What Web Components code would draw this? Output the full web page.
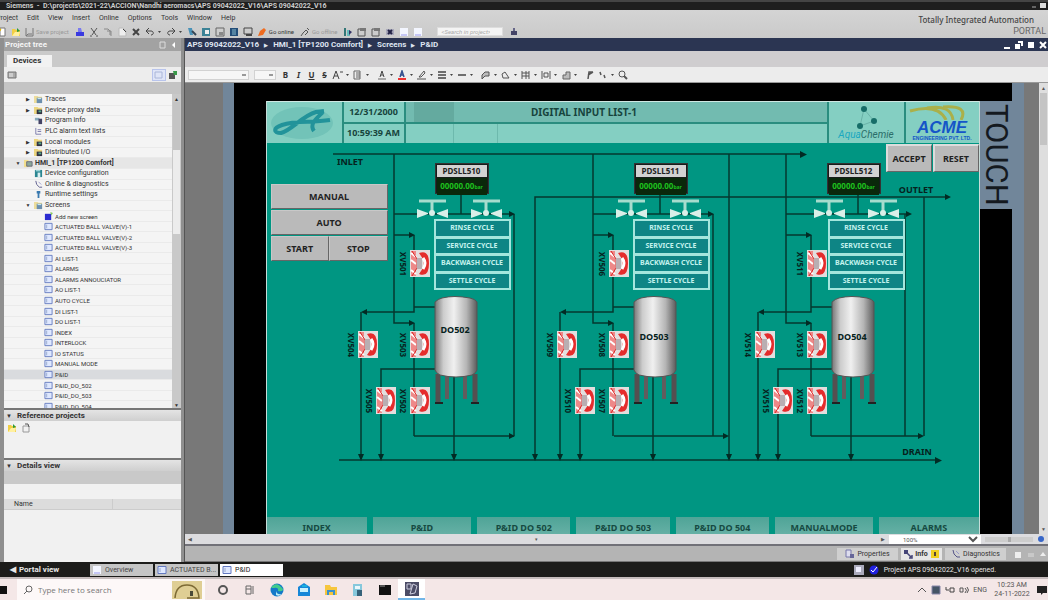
<!DOCTYPE html>
<html lang="en">
<head>
<meta charset="utf-8">
<title>TIA Portal - P&amp;ID screen</title>
<style>
html,body{height:100%;margin:0}
body{background:#cdcdcd;overflow:hidden;font:7px/10px Roboto,"Noto Sans",sans-serif;color:#333}
</style>
</head>
<body>
<tia-app></tia-app>
<script>
const BASE = `
*{box-sizing:border-box}
button,input,select{font:inherit;color:inherit;margin:0;padding:0;border:0;background:none;border-radius:0;outline:0}
button{white-space:nowrap;display:flex;align-items:center;justify-content:center}
svg{display:block;flex:none}
a{color:inherit;text-decoration:none}
ul,h1,h2,p{margin:0;padding:0;list-style:none;font-size:inherit}
`;
function define(name, css, html) {
  const t = document.createElement('template');
  t.innerHTML = `<style>${BASE}${css}</style>${html}`;
  customElements.define(name, class extends HTMLElement {
    constructor() {
      super();
      this.attachShadow({mode: 'open'}).append(t.content.cloneNode(true));
    }
  });
}
const svg = (body, w = 10, h = 10) => `<svg width="${w}" height="${h}" viewBox="0 0 ${w} ${h}" fill="none" aria-hidden="true">${body}</svg>`;
const I = {
  fresh: svg('<path d="M2 1h5v8H2z" fill="#fff" stroke="#777"/><path d="M0 2l3 1" stroke="#e8b800" stroke-width="2"/>'),
  open: svg('<path d="M1 2h3l1 1h4v6H1z" fill="#f1cf45"/><path d="M4 5h5L8 9H1z" fill="#fff0a0"/><path d="M6 1l3 3-3 1z" fill="#2d9a3a"/>'),
  save: svg('<path d="M2 1v8h7V1M2 9l2-2h4" stroke="#777"/>'),
  print: svg('<path d="M3 1h3l1 4H3z" fill="#7a7af0"/><path d="M1 5h8v4H1z" fill="#3a3ae0"/>'),
  cut: svg('<path d="M2 1l5 7M8 1L3 8M1 9h2M7 9h2" stroke="#555"/>'),
  copy: svg('<path d="M1 2h4l2 2v4M4 4h4v5" stroke="#888"/>'),
  paste: svg('<path d="M2 1h4l3 3v5H2z" fill="#eee" stroke="#bbb"/><path d="M6 2l3 3" stroke="#444"/>'),
  del: svg('<path d="M2 2l6 6M8 2L2 8" stroke="#444" stroke-width="2"/>'),
  undo: svg('<path d="M4 1L1 4l3 3M1 4h5c3 0 3 4 0 4" stroke="#444"/><path d="M13 4h3l-1.500 2z" fill="#444"/>', 17),
  redo: svg('<path d="M6 1l3 3-3 3M9 4H4C1 4 1 8 4 8" stroke="#444"/><path d="M13 4h3l-1.500 2z" fill="#444"/>', 17),
  comp: svg('<path d="M1 1h4l1 7H3z" fill="#4a92b8"/><path d="M5 4l4 4" stroke="#345" stroke-width="2"/>'),
  dl: svg('<path d="M1 1h8v8H1z" fill="#3b8296"/><path d="M4 3h4v4H4z" fill="#eee"/>'),
  ul: svg('<path d="M1 1h8v8H1z" stroke="#666"/><path d="M4 5h4v3H4z" fill="#888"/>'),
  sim: svg('<path d="M1 1h8v8H1z" fill="#234d78"/><path d="M3 3h4M3 5h4M3 7h4" stroke="#8bc"/>'),
  start: svg('<path d="M1 1h8v6H1z" stroke="#444"/><path d="M3 8h6" stroke="#444" stroke-width="2"/>'),
  plug: svg('<path d="M1 9l2-5 4-3 2 2-3 5z" fill="#f06c20"/>'),
  plugoff: svg('<path d="M1 9l2-3 3-3 2 2-3 3M7 1l2 2" stroke="#555"/>'),
  dev: svg('<path d="M1 1h2v8H1z" fill="#377"/><path d="M4 3h3v6H4z" fill="#6bb"/><path d="M6 3l3 2-3 3z" fill="#336"/>'),
  win: svg('<path d="M1 2h7v7H1z" stroke="#555"/><path d="M3 1h6v3H3z" fill="#777"/>'),
  cross: svg('<path d="M1 2h8v6H1z" fill="#aab"/><path d="M3 3l4 4M7 3L3 7" stroke="#224" stroke-width="2"/>'),
  page: svg('<path d="M1 1h8v8H1z" fill="#f3f6ff"/><path d="M2 8h6" stroke="#99e"/>'),
  find: svg('<path d="M2 4h6v4H2z" fill="#446"/><path d="M4 1h2v3H4z" fill="#668"/>'),
  folder: svg('<path d="M0 1h4l1 1h4v7H0z" fill="#eddd9c"/><path d="M3 3h6v6H3z" fill="#6c8fae"/><path d="M4 4h4" stroke="#dff"/>'),
  folderd: svg('<path d="M0 1h4l1 1h4v7H0z" fill="#ecd680"/><path d="M3 4h6v5H3z" fill="#334"/><path d="M5 5h3v2H5z" fill="#5a8"/>'),
  info: svg('<path d="M1 2h5v3H1z" fill="#8ab"/><path d="M5 3h4v6H5z" fill="#446"/>'),
  list: svg('<path d="M2 1v7h6M4 3h4M4 5h4" stroke="#77a"/>'),
  hmi: svg('<path d="M0 1h5v8H0z" fill="#f1de8c"/><path d="M3 3h6v5H3z" fill="#8aa89a" stroke="#667"/>'),
  conf: svg('<path d="M1 1h8v8H1z" fill="#2a8590"/><path d="M4 4h3v5H4z" fill="#d8eef0"/><path d="M2 2h5" stroke="#dff"/>'),
  diag: svg('<path d="M2 1l1 4 3 3h3" stroke="#558"/><path d="M5 2l3 3" stroke="#99c"/>'),
  run: svg('<path d="M3 1h4v3H6v5H4V4H3z" fill="#3a7ab0"/>'),
  add: svg('<path d="M1 2h7v7H1z" fill="#2b2bd0"/><path d="M7 0l3 1-2 3z" fill="#8ac860"/>'),
  scr: svg('<path d="M1 1.500h8v7H1z" fill="#dfe8ff" stroke="#6379c0"/><path d="M3 3v4" stroke="#9ac"/>'),
  props: svg('<path d="M1 1h5v7H1z" fill="#dde" stroke="#77a"/><path d="M5 5h4v4H5z" fill="#669"/>'),
  inf: svg('<path d="M1 1h4v4H1z" fill="#447"/><path d="M4 4l4 4M9 6v3H6" stroke="#447" stroke-width="1.500"/>'),
};
const btn = (icon, label, cls = '') => `<button class="${cls}" aria-label="${label}" title="${label}">${icon}</button>`;

define('tia-title', `
:host{display:flex;height:10px;flex:none;background:#1e1e1e;border-top:2px solid #444;color:#ccc;align-items:center;padding:0 2px 0 6px;font-size:7px;line-height:8px}
h1{font-weight:700;flex:1;white-space:pre}
`, `<h1>Siemens  -  D:\\projects\\2021-22\\ACCION\\Nandhi aeromacs\\APS 09042022_V16\\APS 09042022_V16</h1>${btn(svg('<path d="M2 5h4" stroke="#aaa"/>', 8, 8), 'Minimize')}${btn(svg('<path d="M2 1h6v5H2z" fill="#ddd"/>', 8, 8), 'Restore')}`);

define('tia-menubar', `
:host{display:flex;height:28px;flex:none;background:linear-gradient(#d4d4d4,#cacaca);justify-content:space-between}
nav{display:flex;height:15px;align-items:center;gap:9px;padding-top:1px;margin-left:-4px}
.tools{display:flex;height:13px;align-items:center;font-size:6px;margin-left:-4px}
.tools button{width:14px;height:12px}
.tools .w{width:21px}.tools .t{width:auto;gap:2px;padding:0 4px 0 2px}
.tools .o{padding:0 1px}
.dim{color:#999}
input{width:66px;height:9px;background:#f4f4f4;border:1px solid #ddd;padding:0 3px;margin:0 4px 0 12px;font-style:italic}
input::placeholder{color:#aaa;opacity:1}
.brand{text-align:right;font:500 8px/10px "Noto Sans",sans-serif;padding:5px 2px 0 0;color:#444}
.brand p:first-child{padding-right:12px}
.brand p+p{font:9px/12px Roboto,sans-serif;color:#666}
`, `<div><nav>${['Project','Edit','View','Insert','Online','Options','Tools','Window','Help'].map(m => `<button>${m}</button>`).join('')}</nav>
<div class="tools">${btn(I.fresh,'New project')}<button class="t o" aria-label="Open project">${I.open}</button><button class="t dim">${I.save}Save project</button>
${btn(I.print,'Print')}${btn(I.cut,'Cut')}${btn(I.copy,'Copy')}${btn(I.paste,'Paste')}${btn(I.del,'Delete')}${btn(I.undo,'Undo','w')}${btn(I.redo,'Redo','w')}
${btn(I.comp,'Compile')}${btn(I.dl,'Download')}${btn(I.ul,'Upload')}${btn(I.sim,'Simulate')}${btn(I.start,'Start runtime')}
<button class="t">${I.plug}Go online</button><button class="t dim">${I.plugoff}Go offline</button>
${btn(I.dev,'Accessible devices')}${btn(I.win,'Start')}${btn(I.win,'Stop')}${btn(I.cross,'Cross references')}${btn(I.page,'Split horizontally')}${btn(I.page,'Split vertically')}
<input type="search" aria-label="Search in project" placeholder="&lt;Search in project&gt;">${btn(I.find,'Find')}</div></div>
<div class="brand"><p>Totally Integrated Automation</p><p>PORTAL</p></div>`);

const tree = [
  [1,'▶','folder','Traces'],[1,'▶','folderd','Device proxy data'],[1,'','info','Program info'],[1,'','list','PLC alarm text lists'],
  [1,'▶','folderd','Local modules'],[1,'▶','folderd','Distributed I/O'],[0,'▼','hmi','HMI_1 [TP1200 Comfort]'],
  [1,'','conf','Device configuration'],[1,'','diag','Online & diagnostics'],[1,'','run','Runtime settings'],[1,'▼','folder','Screens'],
  [2,'','add','Add new screen'],
  ...['ACTUATED BALL VALVE(V)-1','ACTUATED BALL VALVE(V)-2','ACTUATED BALL VALVE(V)-3','AI LIST-1','ALARMS','ALARMS ANNOUCIATOR','AO LIST-1','AUTO CYCLE','DI LIST-1','DO LIST-1','INDEX','INTERLOCK','IO STATUS','MANUAL MODE','P&ID','P&ID_DO_502','P&ID_DO_503','P&ID_DO_504'].map(n => [2,'','scr',n])
];
define('tia-project-tree', `
:host{display:flex;flex-direction:column;min-height:0;background:#ededed;border:solid #8f8f8f;border-width:0 3px 0 4px}
.head{height:13px;flex:none;background:#a2a2a2;color:#f4f4f4;font-weight:700;font-size:8px;display:flex;align-items:center;padding:0 3px 0 1px}
.head h2{flex:1}
.tabs{height:16px;flex:none;background:#cacaca;display:flex;align-items:flex-end;padding-left:3px}
.tabs button{width:45px;height:12px;background:#f2f2f2;font-weight:700;font-size:8px;justify-content:flex-start;padding-left:6px}
.bar{height:15px;flex:none;display:flex;align-items:center;padding:0 3px;gap:2px}
.bar .sp{flex:1}
.on{background:#dfe5f7;border:1px solid #b8c4ec;width:14px;height:12px}
.gap{height:12px;flex:none;background:#c4c4c4}
.body{flex:1;min-height:0;display:flex;background:#f4f4f4}
ul{flex:1;height:318px;display:grid;grid-template-rows:repeat(30,1fr);padding-top:1px}
li{display:flex;align-items:center;gap:2px;border-bottom:1px solid #eaeaea;font-size:7px;line-height:9px;white-space:nowrap;min-height:0}
li svg{width:9px;height:9px}
.l0{padding-left:10px;background:#e6e6e6;font-weight:700}.l1{padding-left:20px}.l2{padding-left:30px;font-size:6px}
.tw{width:8px;font-size:5px;text-align:center}
.sel{background:#d9dbde}
.sb{width:9px;background:#c9c9c9;display:flex;flex-direction:column;align-items:center;justify-content:space-between;font-size:5px}
.sb i{width:7px;height:132px;background:linear-gradient(#c4c4c4 48px,#ececec 48px)}
.sb b{height:8px}
.sb u{flex:1}
`, `<div class="head"><h2>Project tree</h2>${btn(svg('<path d="M2 2h5v6H2z" stroke="#ddd"/>'),'Auto collapse')}${btn(svg('<path d="M7 2v6L4 5z" fill="#fff"/>'),'Collapse')}</div>
<div class="tabs"><button role="tab">Devices</button></div>
<div class="bar">${btn(svg('<path d="M1 2h8v6H1z" fill="#aaa" stroke="#777"/><path d="M3 3v4M5 3v4" stroke="#eee"/>'),'Columns')}<span class="sp"></span>${btn(svg('<path d="M1 2h7v6H1z" stroke="#aab6d8"/>'),'Overview','on')}${btn(svg('<path d="M1 3h6v6H1z" fill="#555"/><path d="M5 1h4v4H6z" fill="#3a9a4a"/>'),'Link')}</div>
<div class="gap"></div>
<div class="body"><ul role="tree">${tree.map(([l,tw,ic,n]) => `<li role="treeitem" class="l${l}${n === 'P&ID' ? ' sel' : ''}"><span class="tw" aria-hidden="true">${tw}</span>${I[ic]}<span>${n.replace('&','&amp;')}</span></li>`).join('')}</ul>
<div class="sb" aria-hidden="true"><b>▲</b><i></i><u></u><b>▼</b></div></div>`);

define('tia-section', `
:host{display:block;background:#f1f1f1;border:solid #8f8f8f;border-width:0 3px 0 4px;overflow:hidden}
h2{height:13px;border-top:2px solid #777;background:linear-gradient(#e4e4e4,#cfcfcf);font-size:8px;line-height:11px;font-weight:700;display:flex;gap:5px;padding-left:2px}
h2 i{font-size:6px;font-style:normal}
`, `<h2><i aria-hidden="true">▼</i><slot name="title"></slot></h2><slot></slot>`);

define('tia-sidebar', `
:host{display:grid;grid-template-rows:minmax(0,1fr) 50px 104px;min-height:0}
.icons{display:flex;gap:4px;padding:2px 3px}
.band{height:13px;background:#c9c9c9}
.cols{margin-top:15px;height:11px;background:#dcdcdc;display:grid;grid-template-columns:98px 1fr;padding-left:10px;font-size:7px;border-bottom:1px solid #ccc}
.cols span+span{border-left:1px solid #ccc}
`, `<tia-project-tree></tia-project-tree>
<tia-section><span slot="title">Reference projects</span><div class="icons">${btn(I.open,'Open reference project')}${btn(svg('<path d="M2 3h6v6H2z" stroke="#999"/><path d="M4 1h3l1 3" stroke="#555"/>'),'Close')}</div></tia-section>
<tia-section><span slot="title">Details view</span><div class="band"></div><div class="cols"><span>Name</span><span></span></div></tia-section>`);

const dd = '<path d="M14 4h3l-1.500 2z" fill="#444"/>';
const wide = p => svg(p + dd, 18);
define('tia-format-bar', `
:host{display:flex;height:16px;flex:none;background:#ececec;align-items:center;padding-left:3px;border-bottom:1px solid #999;font:700 8px/10px "Noto Sans",sans-serif}
select{height:10px;background:#f6f6f6 linear-gradient(#999,#999) right 2px center/4px 2px no-repeat;border:1px solid #d2d2d2;appearance:none}
.f{width:61px;margin-right:5px}.s{width:22px;margin-right:3px}
button{width:13px;height:12px}
.w{width:20px}.g{margin-left:4px}
.i{font-style:italic}.u{text-decoration:underline}.k{text-decoration:line-through}
`, `<select class="f" aria-label="Font"></select><select class="s" aria-label="Size"></select>
<button>B</button><button class="i">I</button><button class="u">U</button><button class="k">S</button>
${btn(wide('<path d="M1 9l3-8 3 8M2 6h4M8 2h3" stroke="#444"/>'),'Font size','w')}${btn(wide('<path d="M2 1v8h6V1zM4 3h4M4 5h4M4 7h4" stroke="#666"/>'),'Align','w')}${btn(wide('<path d="M4 7l2-6 2 6M5 5h2" stroke="#444"/><path d="M2 9h8" stroke="#666"/>'),'Text color','w g')}
${btn(wide('<path d="M4 7l2-6 2 6M5 5h2" stroke="#33508f" stroke-width="1.500"/><path d="M2 9h8" stroke="#e33" stroke-width="2"/>'),'Font color','w')}${btn(wide('<path d="M3 7l5-6 1 2-4 4z" stroke="#555"/><path d="M1 9h9" stroke="#555"/>'),'Fill','w')}
${btn(wide('<path d="M2 2h8M2 5h8M2 8h8" stroke="#444" stroke-width="1.500"/>'),'Line width','w')}${btn(wide('<path d="M2 5h8" stroke="#444" stroke-width="1.500"/>'),'Line style','w')}
${btn(wide('<path d="M2 9V5l3-3h4v4H5z" stroke="#555" fill="#bbb"/>'),'Order','w g')}${btn(wide('<path d="M3 8l-1-4 3-2 4 6z" stroke="#555"/>'),'Rotate','w')}${btn(wide('<path d="M2 1v8M2 3h7M2 6h7M6 1v8M9 1v8" stroke="#555"/>'),'Align objects','w')}${btn(wide('<path d="M2 1v8M10 1v8M4 3h4v4H4z" stroke="#555"/>'),'Distribute','w')}${btn(wide('<path d="M3 9V5h3V2h4v7z" stroke="#666" fill="#bbb"/>'),'Size','w')}
${btn(svg('<path d="M3 9l1-7h4M3 5l5-3" stroke="#555" stroke-width="1.500"/>'),'Tab order','g')}${btn(wide('<path d="M3 2l1 3M7 5l1 3" stroke="#555" stroke-width="1.500"/>'),'Layers','w')}${btn(svg('<circle cx="4" cy="4" r="3" stroke="#555"/><path d="M6 6l3 3" stroke="#555" stroke-width="2"/>'),'Zoom')}`);

/* ---- process diagram: pipes, tanks and valves of the three softener lines ---- */
const motor = (x, y, label) => `<g transform="translate(${x} ${y})"><path d="M0 0h20v27H0z" fill="#e3dede"/><path d="M1 1h5v25H1z" fill="#e88"/><path d="M1 3l5 4M1 10l5 4M1 20l5 4" stroke="#fff" stroke-width="2"/><path d="M2 1l5 8v9l-5 8" stroke="#d22" fill="none"/><path d="M7 8h5v11H7z" fill="#b9aeb2"/><path d="M9 3q10-4 10 10.500T9 24l4-6v-9z" fill="#e52c2c"/><path d="M13 8q4 5 0 11" stroke="#fff" stroke-width="3" fill="none"/></g><text class="v" transform="translate(${x - 10} ${y + 14}) rotate(90)">${label}</text>`;
const hand = x => `<path d="M${x} 209v9l11-4v-1l-11-4zM${x + 31} 209v9l-11-4v-1l11-4z" fill="#d9efe8"/><path d="M${x + 2} 201h27M${x + 15} 201v10" stroke="#a6dccd" stroke-width="3" fill="none"/><circle cx="${x + 15}" cy="213" r="3" fill="#d9efe8"/>`;
const pipes = (f, r) => `<g class="p"><path d="M${f} 154V323H408"/><path d="M${f} 214H508"/><path d="M${f} 235H409M413 235V312H364"/><path d="M413 307h22M360 312V456M413 323V436"/><path d="M434 369H380V456M453 376V456M460 192V214M${r} 214V436"/></g>
<g class="a"><path d="M508 211v6l6-3zM408 232v6l6-3zM366 309v6l-6-3zM408 320v6l6-3zM357 454h6l-3 7zM377 454h6l-3 7zM450 454h6l-3 7z"/></g>`;
const tank = (n, ty) => `<g><path d="M437 374v28M474 374v28" stroke="#554f50" stroke-width="5"/><path d="M446 374v25M464 374v25" stroke="#625c5d" stroke-width="4"/><path d="M434 403h8M470 403h8" stroke="#222" stroke-width="2"/><path d="M434 302q3-3 7-4 12-3 28 0 5 1 7 4v68q-1 3-5 5-16 4-32 0-4-2-5-5z" fill="url(#steel)" stroke="#555" stroke-width="1"/><text x="454" class="n" y="${ty}">${n}</text></g>`;
const unit = (dx, f, r, n, ty, labels) => `<g transform="translate(${dx} 0)">${pipes(f, r)}${hand(416)}${hand(470)}${motor(409,250,labels[0])}${motor(357,331,labels[1])}${motor(409,331,labels[2])}${motor(375,387,labels[3])}${motor(409,387,labels[4])}${tank(n, ty)}</g>`;
define('hmi-diagram', `
:host{display:block}
svg{width:712px;height:374px}
.p{stroke:#04382f;stroke-width:1.500;fill:none}
.a{fill:#022b24}
text{font:700 9px "Noto Sans",sans-serif;fill:#06221d;text-anchor:middle}
.v{font-size:8px}
`, `<svg viewBox="266 143 712 374" role="img" aria-label="Process diagram"><defs><linearGradient id="steel"><stop offset="0" stop-color="#777"/><stop offset=".2" stop-color="#ccc"/><stop offset=".45" stop-color="#f0f0f0"/><stop offset=".75" stop-color="#b5b5b5"/><stop offset="1" stop-color="#5c5c5c"/></linearGradient></defs>
<g class="p"><path d="M332 154H800M534 456V197H944M338 460H935M513 436H413M613 436H723M728 154V456M810 436H918M923 197V436"/></g>
<g class="a"><path d="M799 151v7l7-3.500zM944 194v6l6-3zM934 457v7l7-3.500zM531 454h6l-3 7zM725 454h6l-3 7zM508 433v6l6-3zM722 433v6l6-3zM917 433v6l6-3z"/></g>
${unit(0,393,513,'DO502',333,['XV501','XV504','XV503','XV505','XV502'])}
${unit(199,393,513,'DO503',340,['XV506','XV509','XV508','XV510','XV507'])}
${unit(397,388,507,'DO504',340,['XV511','XV514','XV513','XV515','XV512'])}
<text x="349" y="165">INLET</text><text x="915" y="193">OUTLET</text><text x="916" y="455">DRAIN</text></svg>`);

define('hmi-switch', `
:host{position:absolute;width:54px;height:31px;background:#161c1a;border:1px solid #333;display:grid;grid-template-rows:13px 1fr;text-align:center;font:700 8px/12px "Noto Sans",sans-serif;color:#222}
.n{background:#d2d2d2;margin:1px 1px 0}
.o{color:#1ec01e;font-size:8px;line-height:15px;background:#0a280b;margin:1px}
small{font-size:5px}
`, `<span class="n"><slot></slot></span><span class="o">00000.00<small>bar</small></span>`);

define('hmi-cycles', `
:host{position:absolute;width:77px;height:71px;background:#a4e6dd;padding:2px;display:grid;grid-template-rows:repeat(4,1fr);gap:3px;font:700 7px/10px "Noto Sans",sans-serif;color:#c4f3ee}
button{background:#0e8585}
`, ['RINSE','SERVICE','BACKWASH','SETTLE'].map(c => `<button>${c} CYCLE</button>`).join(''));

define('hmi-screen', `
:host{display:flex;flex-direction:column;width:714px;flex:none;background:#009682;border:solid #c6dcd8;border-width:0 1px;font:700 9px/12px "Noto Sans",sans-serif;color:#17443d}
header{height:42px;flex:none;display:grid;grid-template-columns:75px 60px 1fr 75px 73px;grid-template-rows:1fr 1fr;gap:2px;background:#2a8d7f;border-top:1px solid #cfe8e3}
header>*{background:#84cfc2;display:flex;align-items:center;justify-content:center;overflow:hidden}
.logo{grid-row:1/3}.d{grid-column:2}
.t{grid-column:3;grid-row:1;background:linear-gradient(90deg,#72bbb0 8px,#64aa9f 8px 48px,#72bbb0 48px);padding-right:64px;font-size:10px}
.s{grid-column:3;grid-row:2;display:grid;grid-template-columns:48px 44px 1fr;padding:0}
.s i{height:100%;border-right:1px solid #6db9ad}
.aq{grid-column:4;flex-direction:column;font:italic 10px/10px Roboto,sans-serif;color:#2a6d68}
.aq b{font-weight:400;color:#18a8c0}
.ac{grid-column:5;flex-direction:column;color:#1455c8;font:italic 900 17px/15px "Liberation Sans",sans-serif}
.ac small{font:700 5px/6px "Liberation Sans",sans-serif}
main{position:relative;height:374px;flex:none}
button{background:#bababa;color:#222;border:solid;border-width:2px 1px 1px 2px;border-color:#dcdcdc #666 #666 #dcdcdc}
.modes{position:absolute;left:4px;top:41px;width:117px;display:grid;grid-template:25px 25px 25px/1fr 1fr;gap:1px 0}
.modes button{border-color:#c8c8c8 #666 #666 #c8c8c8;border-width:1px}
.modes .x{grid-column:span 2}
.ack{position:absolute;right:0;top:1px;display:grid;grid-template:28px/46px 46px;gap:1px}
footer{flex:1;display:grid;grid-template-columns:100fr 98fr 93fr 93fr 93fr 98fr 99fr;gap:6px;min-height:17px}
footer button{border:0;background:linear-gradient(#4fa497,#65b0a5);color:#164a42;align-items:flex-end}
`, `<header>
<div class="logo">${svg('<ellipse cx="34" cy="19" rx="31" ry="16" fill="#72c3b8"/><path d="M56 7L48 8C34 12 24 26 13 29C5 29 5 24 14 21C28 16 42 19 62 16M55 8C48 15 41 20 46 27" stroke="#22939a" stroke-width="4"/>',72,38)}</div>
<time class="d">12/31/2000</time><h2 class="t">DIGITAL INPUT LIST-1</h2><time class="d">10:59:39 AM</time><div class="s"><i></i><i></i></div>
<div class="logo aq">${svg('<path d="M16 4l10 12-14 5z" stroke="#6ab2a8"/><circle cx="16" cy="4" r="3" fill="#176d68"/><circle cx="26" cy="16" r="3" fill="#176d68"/><circle cx="12" cy="21" r="3" fill="#176d68"/>',36,25)}<span><b>Aqua</b>Chemie</span></div>
<div class="logo ac">${svg('<path d="M1 7q28-8 36 9M18 4q24-4 26 12M34 3q26-2 18 13" stroke="#aab04a" stroke-width="3"/>',66,16)}ACME<small>ENGINEERING PVT. LTD.</small></div>
</header>
<main><hmi-diagram></hmi-diagram>
<div class="modes"><button class="x">MANUAL</button><button class="x">AUTO</button><button>START</button><button>STOP</button></div>
<div class="ack"><button>ACCEPT</button><button>RESET</button></div>
<hmi-switch style="left:168px;top:20px">PDSLL510</hmi-switch><hmi-switch style="left:367px;top:20px">PDSLL511</hmi-switch><hmi-switch style="left:560px;top:20px">PDSLL512</hmi-switch>
<hmi-cycles style="left:167px;top:76px"></hmi-cycles><hmi-cycles style="left:366px;top:76px"></hmi-cycles><hmi-cycles style="left:561px;top:76px"></hmi-cycles>
</main>
<footer><button>INDEX</button><button>P&amp;ID</button><button>P&amp;ID DO 502</button><button>P&amp;ID DO 503</button><button>P&amp;ID DO 504</button><button>MANUALMODE</button><button>ALARMS</button></footer>`);

define('tia-editor', `
:host{display:flex;flex-direction:column;min-width:0;min-height:0}
.crumbs{height:13px;flex:none;background:#2b3552;color:#dfe4f0;display:flex;align-items:center;font-size:8px;font-weight:700;padding:0 2px;gap:5px}
.crumbs span{font-size:5px}
.crumbs .sp{flex:1}
.crumbs button{width:7px}
.blank{height:16px;flex:none;background:#cfcdcf}
.view{flex:1;min-height:0;display:grid;grid-template-columns:1fr 9px}
.stage{background:#787878;overflow:hidden;display:flex;justify-content:center;padding:0 1px 0 23px;min-width:0}
.panel{display:flex;background:#000;border:solid #71869a;border-width:0 12px 0 11px;padding:18px 0 0 32px;flex:none}
.touch{width:32px;align-self:flex-start;height:108px;background:#71869a;display:flex;align-items:center;justify-content:center;writing-mode:vertical-rl;font:31px/32px Roboto,sans-serif;color:#14191f}
.vs{background:#dedede;display:flex;flex-direction:column;justify-content:space-between;align-items:center;font-size:5px;color:#555}
.vs i{flex:none;width:7px;height:52px;background:#c4c4c4}
.vs u{flex:1}
.hs{height:10px;flex:none;background:#dcdcdf;display:flex;align-items:center;font-size:5px;padding:0 3px;color:#555;gap:4px}
.hs .tr{flex:1;text-align:center}
.hs select{width:92px;height:9px;background:#fff;font-size:6px;padding-left:10px}
.hs input{width:48px;height:5px;appearance:none;background:#cdcdcd}
.hs input::-webkit-slider-thumb{appearance:none;width:3px;height:5px;background:#aaa}
.insp{height:18px;flex:none;background:#b4b4b4;border-top:2px solid #717178;border-bottom:1px solid #777;display:flex;justify-content:flex-end;align-items:center;gap:3px;padding-right:1px;font-size:7px}
.insp button{height:12px;background:#cfcfcf;width:61px;gap:2px}
.insp .on{background:#e6e6e6;font-weight:700;width:41px}
.insp .ic{background:none;width:9px}
.insp .first{margin-left:5px}
`, `<div class="crumbs"><a href="#aps">APS 09042022_V16</a><span>▶</span><a href="#hmi">HMI_1 [TP1200 Comfort]</a><span>▶</span><a href="#screens">Screens</a><span>▶</span><a href="#pid">P&amp;ID</a><i class="sp"></i>
${btn(svg('<path d="M2 8h6" stroke="#fff" stroke-width="2"/>'),'Minimize')}${btn(svg('<path d="M1 4h5v5H1zM4 1h5v5H7V3H4z" fill="#fff"/>'),'Restore')}${btn(svg('<path d="M2 2h6v6H2z" fill="#fff"/>'),'Maximize')}${btn(svg('<path d="M2 2l6 6M8 2L2 8" stroke="#fff" stroke-width="2"/>'),'Close')}</div>
<div class="blank"></div><tia-format-bar></tia-format-bar>
<div class="view"><div class="stage"><div class="panel"><hmi-screen></hmi-screen><div class="touch">TOUCH</div></div></div>
<div class="vs" aria-hidden="true"><span>▲</span><i></i><u></u><span>▼</span></div></div>
<div class="hs"><span aria-hidden="true">◀</span><span class="tr" aria-hidden="true">▾</span><span aria-hidden="true">▶</span><select aria-label="Zoom"><option>100%</option></select><input type="range" aria-label="Zoom slider">${svg('<circle cx="4" cy="5" r="3" fill="#3867c8"/>',8,10)}</div>
<div class="insp"><button>${I.props}Properties</button><button class="on">${I.inf}Info ${svg('<path d="M1 1h8v8H1z" fill="#f0d020"/><path d="M5 3v4" stroke="#543" stroke-width="2"/>')}</button><button>${I.diag}Diagnostics</button>${btn(svg('<path d="M1 3h6v6H1z" fill="#eee"/>'),'Float','ic first')}${btn(svg('<path d="M2 7h6M2 5h6" stroke="#ddd"/>'),'Shrink','ic')}${btn(svg('<path d="M2 7l3-4 3 4z" fill="#eee"/>'),'Expand','ic')}</div>`);

define('tia-status', `
:host{display:flex;height:15px;flex:none;background:#1c1c1a;align-items:center;color:#e8e8e8;padding-right:52px;font-size:7px}
.pv{width:90px;justify-content:flex-start;padding-left:10px;gap:3px;font-weight:700;font-size:8px}
.tab{width:63px;height:12px;background:#c5c5c5;color:#444;margin-right:2px;justify-content:flex-start;padding-left:2px;gap:3px}
.on{background:#fff;color:#222}
.m{margin-left:auto;display:flex;align-items:center;gap:5px;font-size:7px}
`, `<button class="pv"><span aria-hidden="true">◀</span>Portal view</button><button class="tab">${I.page}Overview</button><button class="tab">${I.scr}ACTUATED B...</button><button class="tab on">${I.scr}P&amp;ID</button>
<p class="m">${svg('<path d="M0 0h10v10H0z" fill="#aab"/><path d="M2 2h5v5H2z" fill="#eef"/>')}${svg('<circle cx="5" cy="5" r="4.500" fill="#2020e0"/><path d="M2 5l2 2 4-5" stroke="#fff"/>')}Project APS 09042022_V16 opened.</p>`);

define('win-taskbar', `
:host{display:flex;height:23px;flex:none;background:#f4e7e7;border-top:2px solid #c5bcbc;align-items:stretch;color:#555;padding-right:1px}
.st{width:17px;justify-content:flex-start}
label{width:188px;background:#fdf8f8;display:flex;align-items:center;padding:0 3px 0 6px;gap:5px}
input{flex:1;min-width:0;font:8px/12px "Open Sans",sans-serif}
input::placeholder{color:#777;opacity:1}
.ap{width:27px}
.ap.f{margin-left:4px}
.on{background:#fff;border-bottom:2px solid #72b6e8}
.tray{margin-left:auto;display:flex;align-items:center;gap:4px;font-size:7px}
.tray button{height:20px}
time{text-align:center;line-height:9px;width:42px;font-size:7px}
`, `${btn(svg('<path d="M0 1h7v8H0z" fill="#111"/>'),'Start','st')}
<label>${svg('<circle cx="6" cy="4" r="3" stroke="#666"/><path d="M4 6L1 9" stroke="#666"/>')}<input type="text" aria-label="Search" placeholder="Type here to search">${svg('<path d="M0 0h30v18H0z" fill="#dfce94"/><path d="M3 17Q4 4 15 4T27 17H15" stroke="#7d6a34" stroke-width="1.500"/><path d="M18 10h3v5h-3z" fill="#4a4a38"/>',30,18)}</label>
${btn(svg('<circle cx="6" cy="6" r="4" stroke="#555" stroke-width="2"/>',12,12),'Cortana','ap f')}
${btn(svg('<path d="M2 2h5v8H2zM9 2v8M2 5h5" stroke="#666"/>',12,12),'Task view','ap')}
${btn(svg('<circle cx="7" cy="7" r="6.500" fill="#1479c8"/><path d="M1 5Q6-3 13 6q0 3-5 2 1-4-4-3z" fill="#43cc8c"/><path d="M6 8q1 4 6 3-3 3-6 1z" fill="#b8ecf5"/>',14,14),'Edge','ap')}
${btn(svg('<path d="M1 4l6-4 6 4v9H1z" fill="#1687d8"/><path d="M3 5h8v4H3z" fill="#c8f1fd"/><path d="M5 2h5v2H5z" fill="#19b0dd"/>',14,14),'Mail','ap')}
${btn(svg('<path d="M1 2h5l1 2h6v8H1z" fill="#f6c63d"/><path d="M3 7h8v5H9V9H5v3H3z" fill="#3b91cc"/>',14,14),'File Explorer','ap')}
${btn(svg('<path d="M2 1h9v12H2z" fill="#86c8dc"/><path d="M4 3h5v3H4z" fill="#eaf7fb"/><path d="M6 7h5v6H6z" fill="#36627a"/>',14,14),'Calculator','ap')}
${btn(svg('<path d="M1 2h12v10H1z" fill="#111"/><path d="M2 3h5" stroke="#999"/>',14,14),'Terminal','ap')}
${btn(svg('<path d="M0 0h14v14H0z" fill="#4b4c66"/><path d="M2 2h4v5H2zM8 2l4 2-2 7-5 1z" stroke="#ccd"/>',14,14),'TIA Portal','ap on')}
<div class="tray">${btn(svg('<path d="M1 7l4-4 4 4" stroke="#555"/>'),'Hidden icons')}${btn(svg('<path d="M1 1h8v8H1z" fill="#456" stroke="#88a"/>'),'App')}${btn(svg('<path d="M1 2v3h3M5 3h4v4H5z" stroke="#444"/>'),'Battery')}${btn(svg('<path d="M1 3h3v4H1zM6 3q3 2 0 5M8 2q3 3 0 6" stroke="#555"/>'),'Volume')}<span>ENG</span><time>10:23 AM<br>24-11-2022</time>${btn(svg('<path d="M0 1h10v7H6l-2 2V8H0z" fill="#222"/>'),'Notifications')}</div>`);

define('tia-app', `
:host{display:flex;flex-direction:column;height:100vh}
.work{flex:1;min-height:0;display:grid;grid-template-columns:184px minmax(0,1fr)}
tia-editor{border-left:1px solid #555}
`, `<tia-title></tia-title><tia-menubar></tia-menubar><div class="work"><tia-sidebar></tia-sidebar><tia-editor></tia-editor></div><tia-status></tia-status><win-taskbar></win-taskbar>`);
</script>
</body>
</html>
